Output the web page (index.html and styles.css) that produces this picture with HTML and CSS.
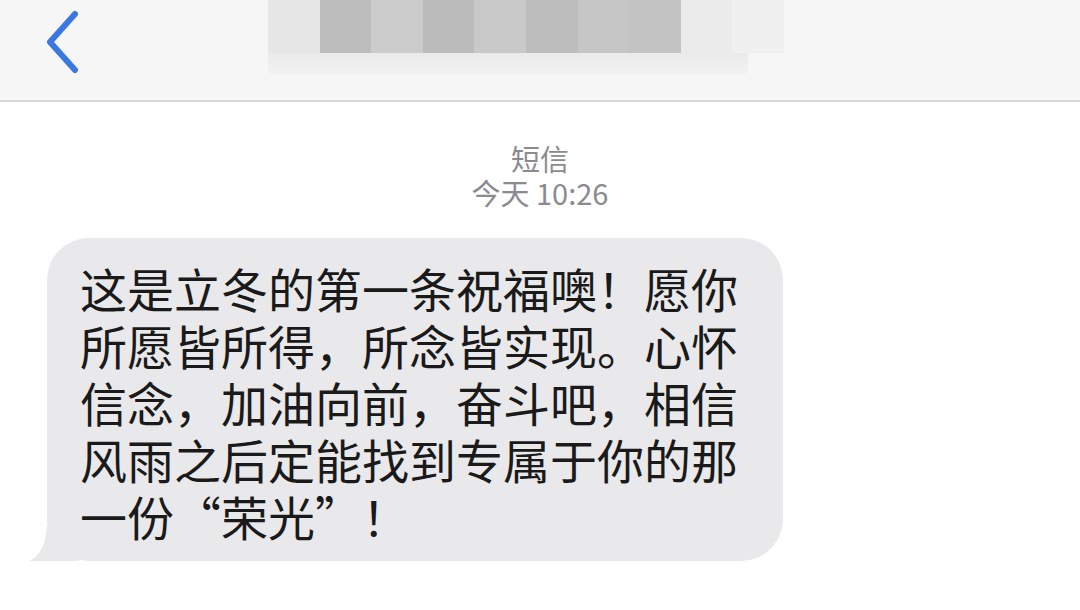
FILE: index.html
```html
<!DOCTYPE html>
<html lang="zh-CN">
<head>
  <meta charset="utf-8">
  <title>短信</title>
  <link rel="stylesheet" href="styles.css">
</head>
<body>
  <header class="nav-bar">
    <button class="back-btn" aria-label="返回">
      <svg width="40" height="64" viewBox="0 0 40 64">
        <path d="M31 4 L6 32 L31 60" fill="none" stroke="#3b77e2" stroke-width="6" stroke-linecap="round" stroke-linejoin="round"/>
      </svg>
    </button>
    <div class="contact-blur">
      <div class="blur-row top">
        <span class="b1"></span><span class="b2"></span><span class="b3"></span><span class="b4"></span><span class="b5"></span><span class="b6"></span><span class="b7"></span><span class="b8"></span><span class="b9"></span><span class="b10"></span>
      </div>
      <div class="blur-row bottom"></div>
    </div>
  </header>

  <main class="thread">
    <div class="meta">
      <div class="meta-title">短信</div>
      <div class="meta-time">今天 10:26</div>
    </div>

    <div class="bubble">
      这是立冬的第一条祝福噢！愿你所愿皆所得，所念皆实现。心怀信念，加油向前，奋斗吧，相信风雨之后定能找到专属于你的那一份“荣光”！
    </div>
  </main>
</body>
</html>
```

FILE: styles.css
```css
body {
  margin: 0;
  background-color: #ffffff;
  font-family: "Noto Sans CJK SC", "Noto Sans", sans-serif;
  overflow: hidden;
}

.nav-bar {
  height: 100px;
  background-color: #f6f6f6;
  border-bottom: 2px solid #d6d6d6;
  display: flex;
  align-items: flex-start;
}

.back-btn {
  margin: 10px 0 0 44px;
  padding: 0;
  border: none;
  background: none;
  width: 40px;
  height: 64px;
}

.contact-blur {
  margin-left: 184px;
  width: 516px;
  display: flex;
  flex-direction: column;
}

.blur-row.top {
  height: 53px;
  display: flex;
}

.blur-row.top span {
  flex: 1;
}

.b1 { background-color: #e6e6e6; }
.b2 { background-color: #bdbdbd; }
.b3 { background-color: #cbcbcb; }
.b4 { background-color: #bbbbbb; }
.b5 { background-color: #c9c9c9; }
.b6 { background-color: #bdbdbd; }
.b7 { background-color: #c6c6c6; }
.b8 { background-color: #c3c3c3; }
.b9 { background-color: #ebebeb; }
.b10 { background-color: #f0f0f0; }

.blur-row.bottom {
  height: 22px;
  width: 480px;
  background: linear-gradient(to bottom, #eaeaea, #f2f2f2);
  border-radius: 0 0 6px 6px;
}

.thread {
  padding: 0 0 0 47px;
}

.meta {
  text-align: center;
  margin: 39px 0 0 -47px;
  color: #8b8b8f;
  font-size: 29px;
  line-height: 34px;
}

.bubble {
  position: relative;
  margin-top: 29px;
  width: 670px;
  padding: 21px 33px 17px 33px;
  background-color: #e9e9eb;
  border-radius: 42px;
  color: #1a1a1a;
  font-size: 47px;
  line-height: 57px;
}

.bubble::before {
  content: "";
  position: absolute;
  left: -18px;
  bottom: 0;
  width: 50px;
  height: 36px;
  background-color: #e9e9eb;
  clip-path: path("M18 0 L50 0 L50 36 L0 36 Q16 30 18 0 Z");
}
```
